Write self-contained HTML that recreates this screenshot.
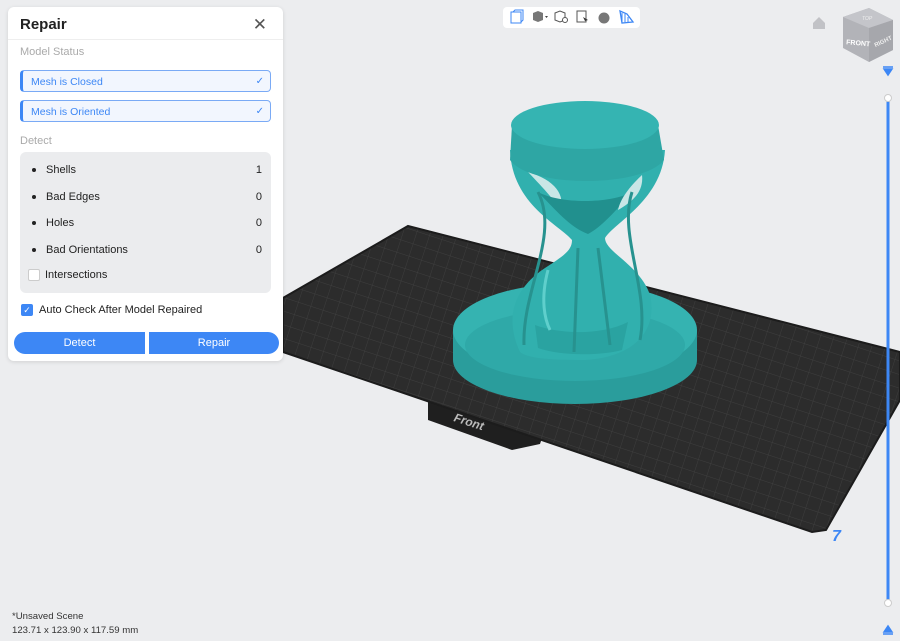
<!DOCTYPE html>
<html><head><meta charset="utf-8"><style>
*{box-sizing:border-box;margin:0;padding:0}
body{width:900px;height:641px;background:#ecedef;font-family:"Liberation Sans",sans-serif;position:relative;overflow:hidden}
.panel{position:absolute;left:8px;top:7px;width:275px;height:354px;background:#fff;border-radius:6px;box-shadow:0 1px 4px rgba(0,0,0,.12)}
.hdr{height:33px;border-bottom:1px solid #eee;padding:9px 12px;font-size:15px;font-weight:bold;color:#222}
.x{position:absolute;right:16px;top:8px;font-size:17px;color:#555;font-weight:normal}
.lbl{position:absolute;left:12px;font-size:11px;color:#aaa}
.st{position:absolute;left:12px;width:251px;height:22px;border:1px solid #7aaaf5;border-left:3px solid #3d87f5;border-radius:4px;background:#f2f6fe;color:#3d87f5;font-size:10.5px;padding:5px 8px}
.st span{position:absolute;right:6px;top:5px;font-size:10px}
.box{position:absolute;left:12px;top:145px;width:251px;height:141px;background:#ebecee;border-radius:6px}
.row{position:absolute;left:12px;right:9px;font-size:11px;color:#222}
.row b{display:inline-block;width:4px;height:4px;border-radius:2px;background:#222;margin-right:10px;vertical-align:middle}
.row i{position:absolute;right:0;font-style:normal}
.btn{position:absolute;top:325px;height:22px;background:#3d87f5;color:#fff;font-size:11px;text-align:center;line-height:22px}
</style></head><body>
<svg width="900" height="641" style="position:absolute;left:0;top:0">
<defs>
<pattern id="g" width="13" height="13" patternUnits="userSpaceOnUse" patternTransform="rotate(18)">
<path d="M13 0H0V13" fill="none" stroke="#444" stroke-width="0.7"/></pattern>
</defs>
<polygon points="428,398 548,420 540,444 512,450 428,420" fill="#1f1f1f"/>
<text x="452" y="428" fill="#bbb" font-size="12" font-family="Liberation Sans" font-style="italic" font-weight="bold" transform="rotate(18 475 428)">Front</text>
<polygon points="408,226 900,352 900,400 826,530 812,532 283,352 283,298" fill="#2c2c2c"/>
<polygon points="408,226 900,352 900,400 826,530 812,532 283,352 283,298" fill="url(#g)"/>
<polygon points="408,226 900,352 900,400 826,530 812,532 283,352 283,298" fill="none" stroke="#1c1c1c" stroke-width="2"/>
<text x="832" y="541" fill="#3d87f5" font-size="16" font-weight="bold" font-style="italic">7</text>
<!-- hourglass -->
<path d="M453,330 L453,360 A122,44 0 0 0 697,360 L697,330 Z" fill="#2a9d9c"/>
<ellipse cx="575" cy="330" rx="122" ry="47" fill="#35b3b1"/>
<ellipse cx="575" cy="345" rx="110" ry="36" fill="#2fa9a8"/>
<path d="M520,352 C505,320 512,290 545,268 C565,255 572,250 572,240 C560,225 512,205 510,150 L665,150 C662,200 615,222 605,238 C605,252 640,265 650,295 C658,330 635,357 585,360 C545,360 528,358 520,352 Z" fill="#31b0ae"/>
<path d="M528,172 C545,190 555,200 560,212 C566,195 555,180 528,172 Z" fill="#c9e6e6"/>
<path d="M538,192 C560,215 572,228 588,234 C600,228 615,212 632,192 C610,204 560,204 538,192 Z" fill="#21908e"/>
<path d="M642,175 C628,188 620,200 618,210 C632,202 644,192 642,175 Z" fill="#c9e6e6"/>
<path d="M535,325 C560,334 600,336 628,322 L622,350 C600,356 560,356 538,348 Z" fill="#2aa3a1"/>
<path d="M512,125 L510,160 C530,188 642,188 664,160 L658,125 Z" fill="#2ea6a4"/>
<ellipse cx="585" cy="125" rx="74" ry="24" fill="#35b4b2"/>
<path d="M578,248 L574,352 M598,248 L610,345 M538,192 C560,235 522,290 524,345 M632,192 C618,235 650,290 640,340" stroke="#27928f" stroke-width="3" fill="none"/>
<path d="M548,270 C540,300 545,320 550,330" stroke="#5fcfcc" stroke-width="3" fill="none"/>
<!-- right slider -->
<line x1="888" y1="99" x2="888" y2="602" stroke="#3d87f5" stroke-width="3"/>
<circle cx="888" cy="98" r="3.5" fill="#fff" stroke="#ccc"/>
<circle cx="888" cy="603" r="3.5" fill="#fff" stroke="#ccc"/>
<path d="M883,67h10M884,69h8l-4,6z" stroke="#3d87f5" stroke-width="1.5" fill="#3d87f5"/>
<path d="M883,634h10M884,632h8l-4,-6z" stroke="#3d87f5" stroke-width="1.5" fill="#3d87f5"/>
<!-- cube -->
<polygon points="843,17 869,8 893,20 893,50 869,62 843,48" fill="#b2b3b8"/>
<polygon points="843,17 869,8 893,20 869,28" fill="#c4c5ca"/>
<polygon points="869,28 893,20 893,50 869,62" fill="#a6a7ac"/>
<text x="846" y="45" fill="#fff" font-size="7" font-weight="bold" transform="rotate(5 855 45)">FRONT</text>
<text x="875" y="45" fill="#eee" font-size="6" font-weight="bold" transform="rotate(-25 880 45)">RIGHT</text>
<text x="862" y="20" fill="#eee" font-size="5" font-style="italic">TOP</text>
<path d="M813,23l6,-6l6,6v6h-12z" fill="#c1c2c6"/>
<!-- toolbar -->
<rect x="503" y="7" width="137" height="21" rx="4" fill="#fff"/>
<rect x="511" y="12" width="10" height="11" fill="none" stroke="#3d87f5"/>
<path d="M513,12l2,-2h8v10l-2,2" fill="none" stroke="#3d87f5"/>
<path d="M533,13l5,-2l5,2v7l-5,2l-5,-2z" fill="#777"/><path d="M545,16l3,0l-1.5,2z" fill="#444"/>
<path d="M555,13l5,-2l5,2v7l-5,2l-5,-2z" fill="none" stroke="#555"/><circle cx="565" cy="20" r="2.5" fill="#fff" stroke="#555"/>
<rect x="577" y="11" width="9" height="11" fill="none" stroke="#555"/><path d="M583,17l5,3l-3,1z" fill="#333"/>
<circle cx="604" cy="18" r="5.5" fill="#777"/>
<path d="M620,11l7,3l6,8l-11,1z" fill="none" stroke="#3d87f5" stroke-width="1.3"/><path d="M622,13v9M625,14v8M628,17v5" stroke="#3d87f5"/>
</svg>
<div class="panel">
<div class="hdr">Repair<span class="x">✕</span></div>
<div class="lbl" style="top:39px">Model Status</div>
<div class="st" style="top:63px">Mesh is Closed<span>✓</span></div>
<div class="st" style="top:93px">Mesh is Oriented<span>✓</span></div>
<div class="lbl" style="top:128px">Detect</div>
<div class="box">
<div class="row" style="top:12px"><b></b>Shells<i>1</i></div>
<div class="row" style="top:39px"><b></b>Bad Edges<i>0</i></div>
<div class="row" style="top:65px"><b></b>Holes<i>0</i></div>
<div class="row" style="top:92px"><b></b>Bad Orientations<i>0</i></div>
<div class="row" style="top:117px;left:8px"><span style="display:inline-block;width:12px;height:12px;border:1px solid #ccc;background:#fff;border-radius:2px;vertical-align:middle;margin-right:5px"></span>Intersections</div>
</div>
<div style="position:absolute;left:13px;top:297px;font-size:11px;color:#222"><span style="display:inline-block;width:12px;height:12px;background:#3d87f5;border-radius:2px;color:#fff;font-size:9px;text-align:center;line-height:12px;vertical-align:middle;margin-right:6px">✓</span>Auto Check After Model Repaired</div>
<div class="btn" style="left:6px;width:131px;border-radius:11px 0 0 11px">Detect</div>
<div class="btn" style="left:141px;width:130px;border-radius:0 11px 11px 0">Repair</div>
</div>
<div style="position:absolute;left:12px;top:610px;font-size:9.6px;color:#333;line-height:14px">*Unsaved Scene<br>123.71 x 123.90 x 117.59 mm</div>
</body></html>
